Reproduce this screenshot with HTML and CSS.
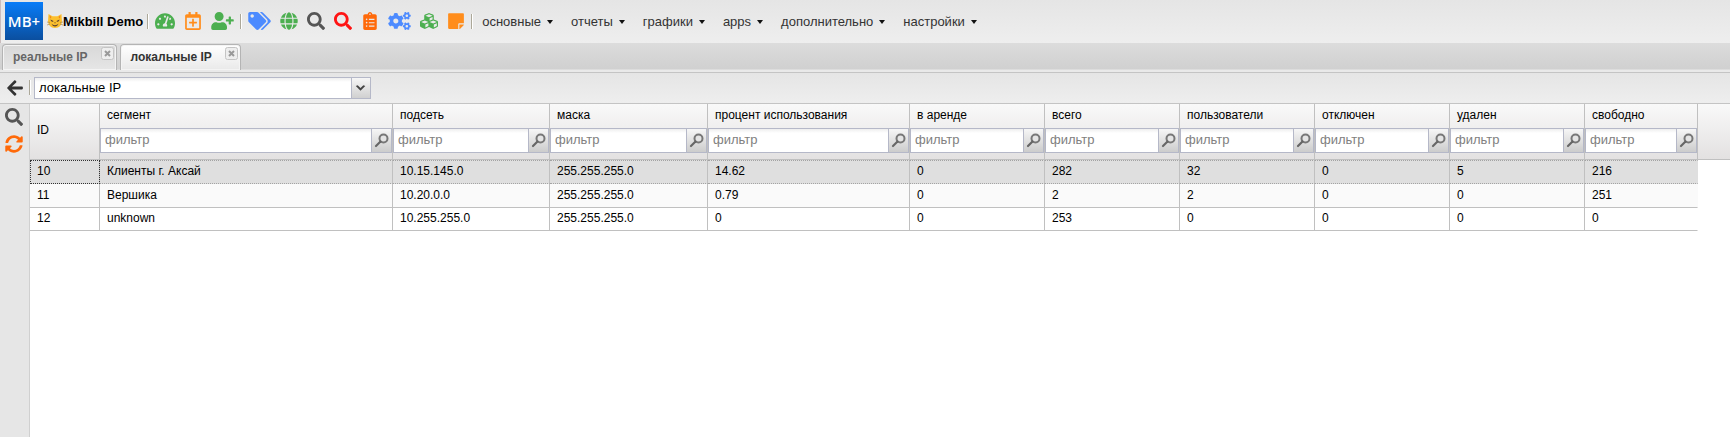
FILE: index.html
```
<!DOCTYPE html>
<html lang="ru">
<head>
    <meta charset="UTF-8" />
    <meta name="viewport" content="width=device-width, initial-scale=1.0" />
    <title>Mikbill Demo</title>
    <link rel="stylesheet" href="styles.css">
</head>
<body>
    <svg class="sprite" aria-hidden="true">
        <symbol id="i-search" viewBox="0 0 512 512"><path d="M505 442.7L405.3 343c-4.5-4.5-10.6-7-17-7H372c27.6-35.3 44-79.7 44-128C416 93.1 322.9 0 208 0S0 93.1 0 208s93.1 208 208 208c48.3 0 92.7-16.4 128-44v16.3c0 6.4 2.5 12.5 7 17l99.7 99.7c9.4 9.4 24.6 9.4 33.9 0l28.3-28.3c9.4-9.4 9.4-24.6.1-34zM208 336c-70.7 0-128-57.2-128-128 0-70.7 57.2-128 128-128 70.7 0 128 57.2 128 128 0 70.7-57.2 128-128 128z"/></symbol>
        <symbol id="i-lens" viewBox="0 0 16 16"><circle cx="9.500" cy="5.500" r="4" fill="#e4e4e4" stroke="#777" stroke-width="2"/><path d="M6.500 8.500L2 13" stroke="#666" stroke-width="2.200" stroke-linecap="round"/></symbol>
        <symbol id="i-close" viewBox="0 0 13 13"><rect x=".5" y=".5" width="12" height="12" rx="2" fill="#eee" stroke="#c4c4c4"/><path d="M4 4l5 5M9 4l-5 5" stroke="#999" stroke-width="2"/></symbol>
    </svg>

    <header class="topbar">
        <div class="logo">MB+</div>
        <svg class="cat" viewBox="0 0 16 16"><path d="M1.5 1l4 2.2h5l4-2.2.4 6c.6 4.500-2.600 8-6.900 8S.6 11.500 1.100 7z" fill="#fcc02e"/><path d="M2.600 2.600L4.500 4 3 5.800zM13.400 2.600L11.500 4 13 5.800z" fill="#f0811c"/><path d="M3.500 6.500l3 1.400c-.4 1.400-2.600 1.200-3-1.400zM12.500 6.500l-3 1.400c.4 1.400 2.600 1.200 3-1.400z" fill="#5b4230"/><path d="M7 9.500h2l-1 1zM4.500 10.500c1.500 2.200 5 2.400 7 0-.5 2-2 3-3.500 3s-3-1-3.500-3z" fill="#5b4230"/><path d="M0 9l3 .5M0 12l3-1M16 9l-3 .5M16 12l-3-1" stroke="#9b7a4a" stroke-width=".6"/></svg>
        <strong class="brand">Mikbill Demo</strong>
        <span class="sep"></span>

        <nav class="icons">
            <button type="button" class="icon green" aria-label="Панель"><svg width="20" height="18" viewBox="0 0 576 512"><path d="M288 32C128.940 32 0 160.940 0 320c0 52.800 14.250 102.260 39.060 144.800 5.610 9.620 16.300 15.200 27.440 15.200h443c11.140 0 21.830-5.580 27.440-15.200C561.750 422.260 576 372.800 576 320c0-159.060-128.940-288-288-288zm0 64c14.710 0 26.580 10.130 30.320 23.650-1.110 2.260-2.640 4.230-3.450 6.670l-9.220 27.670c-5.130 3.490-10.970 6.010-17.640 6.010-17.670 0-32-14.330-32-32S270.330 96 288 96zM96 384c-17.670 0-32-14.330-32-32s14.330-32 32-32 32 14.330 32 32-14.330 32-32 32zm48-160c-17.670 0-32-14.330-32-32s14.330-32 32-32 32 14.330 32 32-14.330 32-32 32zm246.770-72.410l-61.330 184C343.130 347.330 352 364.540 352 384c0 11.720-3.380 22.550-8.880 32H232.880c-5.500-9.450-8.880-20.280-8.880-32 0-33.940 26.500-61.430 59.900-63.590l61.340-184.010c4.170-12.560 17.730-19.450 30.360-15.170 12.570 4.190 19.350 17.790 15.170 30.360zm14.660 57.200l15.520-46.550c3.470-1.290 7.130-2.230 11.050-2.230 17.670 0 32 14.330 32 32s-14.330 32-32 32c-11.380-.010-20.890-6.280-26.570-15.220zM480 384c-17.670 0-32-14.330-32-32s14.330-32 32-32 32 14.330 32 32-14.330 32-32 32z"/></svg></button>
            <button type="button" class="icon amber" aria-label="Событие"><svg width="16" height="18" viewBox="0 0 448 512"><path d="M336 292v24c0 6.600-5.400 12-12 12h-76v76c0 6.600-5.400 12-12 12h-24c-6.600 0-12-5.400-12-12v-76h-76c-6.600 0-12-5.400-12-12v-24c0-6.600 5.400-12 12-12h76v-76c0-6.600 5.400-12 12-12h24c6.600 0 12 5.400 12 12v76h76c6.600 0 12 5.400 12 12zm112-180v352c0 26.500-21.500 48-48 48H48c-26.500 0-48-21.500-48-48V112c0-26.500 21.500-48 48-48h48V12c0-6.600 5.400-12 12-12h40c6.600 0 12 5.400 12 12v52h128V12c0-6.600 5.400-12 12-12h40c6.600 0 12 5.400 12 12v52h48c26.500 0 48 21.500 48 48zm-48 346V160H48v298c0 3.300 2.700 6 6 6h340c3.300 0 6-2.700 6-6z"/></svg></button>
            <button type="button" class="icon green" aria-label="Добавить абонента"><svg width="23" height="18" viewBox="0 0 640 512"><path d="M624 208h-64v-64c0-8.800-7.200-16-16-16h-32c-8.800 0-16 7.200-16 16v64h-64c-8.800 0-16 7.200-16 16v32c0 8.800 7.200 16 16 16h64v64c0 8.800 7.200 16 16 16h32c8.800 0 16-7.200 16-16v-64h64c8.800 0 16-7.200 16-16v-32c0-8.800-7.200-16-16-16zm-400 48c70.700 0 128-57.300 128-128S294.700 0 224 0 96 57.300 96 128s57.300 128 128 128zm89.600 32h-16.700c-22.200 10.200-46.900 16-72.900 16s-50.600-5.800-72.900-16h-16.700C60.200 288 0 348.200 0 422.400V464c0 26.500 21.500 48 48 48h352c26.500 0 48-21.500 48-48v-41.600c0-74.200-60.200-134.400-134.400-134.400z"/></svg></button>
        </nav>
        <span class="sep"></span>

        <nav class="icons">
            <button type="button" class="icon blue" aria-label="Тарифы"><svg width="23" height="18" viewBox="0 0 640 512"><path d="M497.941 225.941L286.059 14.059A48 48 0 0 0 252.118 0H48C21.490 0 0 21.490 0 48v204.118a48 48 0 0 0 14.059 33.941l211.882 211.882c18.744 18.745 49.136 18.746 67.882 0l204.118-204.118c18.745-18.745 18.745-49.137 0-67.882zM112 160c-26.510 0-48-21.490-48-48s21.490-48 48-48 48 21.490 48 48-21.490 48-48 48zm513.941 133.823L421.823 497.941c-18.745 18.745-49.137 18.745-67.882 0l-.36-.36L527.640 323.522c16.999-16.999 26.362-39.600 26.362-63.640s-9.362-46.641-26.362-63.640L331.397 0h48.721a48 48 0 0 1 33.941 14.059l211.882 211.882c18.745 18.745 18.745 49.137 0 67.882z"/></svg></button>
            <button type="button" class="icon green" aria-label="Сеть"><svg width="18" height="18" viewBox="0 0 496 512"><path d="M336.500 160C322 70.700 287.800 8 248 8s-74 62.700-88.500 152h177zM152 256c0 22.200 1.200 43.500 3.300 64h185.300c2.100-20.500 3.300-41.800 3.300-64s-1.200-43.500-3.300-64H155.300c-2.100 20.500-3.300 41.800-3.300 64zm324.700-96c-28.600-67.900-86.500-120.400-158-141.600 24.400 33.800 41.200 84.700 50 141.600h108zM177.200 18.400C105.800 39.600 47.800 92.100 19.300 160h108c8.700-56.900 25.500-107.800 49.900-141.600zM487.400 192H372.700c2.100 21 3.300 42.500 3.300 64s-1.200 43-3.300 64h114.600c5.500-20.500 8.600-41.800 8.600-64s-3.100-43.500-8.500-64zM120 256c0-21.500 1.200-43 3.300-64H8.600C3.200 212.500 0 233.800 0 256s3.200 43.500 8.600 64h114.600c-2-21-3.200-42.500-3.200-64zm39.500 96c14.500 89.300 48.700 152 88.500 152s74-62.700 88.500-152h-177zm159.300 141.600c71.400-21.200 129.400-73.700 158-141.600h-108c-8.800 56.900-25.600 107.800-50 141.600zM19.300 352c28.600 67.900 86.500 120.400 158 141.600-24.400-33.800-41.200-84.700-50-141.600h-108z"/></svg></button>
            <button type="button" class="icon dark" aria-label="Поиск"><svg width="18" height="18"><use href="#i-search"/></svg></button>
            <button type="button" class="icon red" aria-label="Расширенный поиск"><svg width="18" height="18"><use href="#i-search"/></svg></button>
            <button type="button" class="icon orange" aria-label="Заявки"><svg width="14" height="18" viewBox="0 0 384 512"><path d="M336 64h-80c0-35.300-28.700-64-64-64s-64 28.700-64 64H48C21.500 64 0 85.500 0 112v352c0 26.500 21.500 48 48 48h288c26.500 0 48-21.500 48-48V112c0-26.500-21.500-48-48-48zM96 424c-13.300 0-24-10.700-24-24s10.700-24 24-24 24 10.700 24 24-10.700 24-24 24zm0-96c-13.300 0-24-10.700-24-24s10.700-24 24-24 24 10.700 24 24-10.700 24-24 24zm0-96c-13.300 0-24-10.700-24-24s10.700-24 24-24 24 10.700 24 24-10.700 24-24 24zm96-192c13.300 0 24 10.700 24 24s-10.700 24-24 24-24-10.700-24-24 10.700-24 24-24zm128 368c0 4.400-3.600 8-8 8H168c-4.400 0-8-3.600-8-8v-16c0-4.400 3.600-8 8-8h144c4.400 0 8 3.600 8 8v16zm0-96c0 4.400-3.600 8-8 8H168c-4.400 0-8-3.600-8-8v-16c0-4.400 3.600-8 8-8h144c4.400 0 8 3.600 8 8v16zm0-96c0 4.400-3.600 8-8 8H168c-4.400 0-8-3.600-8-8v-16c0-4.400 3.600-8 8-8h144c4.400 0 8 3.600 8 8v16z"/></svg></button>
            <button type="button" class="icon blue" aria-label="Система"><svg width="23" height="18" viewBox="0 0 640 512"><path d="M512.100 191l-8.200 14.300c-3 5.300-9.400 7.500-15.100 5.400-11.800-4.400-22.600-10.700-32.100-18.600-4.600-3.800-5.800-10.500-2.800-15.700l8.200-14.300c-6.900-8-12.300-17.300-15.900-27.400h-16.500c-6 0-11.200-4.300-12.200-10.300-2-12-2.100-24.600 0-37.100 1-6 6.200-10.400 12.200-10.400h16.500c3.600-10.100 9-19.400 15.900-27.400l-8.200-14.300c-3-5.200-1.900-11.900 2.800-15.700 9.500-7.900 20.400-14.200 32.100-18.600 5.700-2.100 12.100.1 15.100 5.400l8.200 14.300c10.500-1.900 21.200-1.900 31.700 0L552 6.300c3-5.300 9.400-7.500 15.100-5.400 11.800 4.400 22.600 10.700 32.100 18.600 4.600 3.800 5.800 10.500 2.800 15.700l-8.200 14.300c6.900 8 12.300 17.300 15.900 27.400h16.500c6 0 11.200 4.300 12.200 10.300 2 12 2.100 24.600 0 37.100-1 6-6.200 10.400-12.200 10.400h-16.500c-3.600 10.100-9 19.400-15.900 27.400l8.200 14.300c3 5.200 1.900 11.900-2.800 15.700-9.500 7.900-20.400 14.200-32.100 18.600-5.700 2.100-12.100-.1-15.100-5.400l-8.200-14.300c-10.400 1.900-21.200 1.900-31.700 0zm-10.500-58.800c38.500 29.600 82.400-14.300 52.800-52.800-38.500-29.700-82.400 14.300-52.800 52.800zM386.300 286.100l33.700 16.800c10.100 5.800 14.500 18.100 10.500 29.100-8.900 24.200-26.400 46.400-42.600 65.800-7.400 8.900-20.200 11.100-30.300 5.300l-29.100-16.800c-16 13.700-34.600 24.600-54.900 31.700v33.600c0 11.600-8.300 21.600-19.700 23.600-24.600 4.200-50.400 4.400-75.900 0-11.500-2-20-11.900-20-23.600V418c-20.300-7.200-38.900-18-54.900-31.700L74 403c-10 5.800-22.900 3.600-30.300-5.300-16.200-19.400-33.300-41.600-42.200-65.700-4-10.900.4-23.200 10.500-29.100l33.300-16.800c-3.900-20.900-3.900-42.400 0-63.400L12 205.800c-10.100-5.800-14.600-18.100-10.500-29 8.900-24.200 26-46.400 42.200-65.800 7.400-8.900 20.200-11.100 30.300-5.300l29.100 16.800c16-13.700 34.600-24.600 54.900-31.700V57.100c0-11.500 8.200-21.500 19.600-23.500 24.600-4.200 50.500-4.400 76-.1 11.500 2 20 11.900 20 23.600v33.600c20.300 7.200 38.900 18 54.900 31.700l29.100-16.800c10-5.800 22.900-3.600 30.300 5.300 16.200 19.400 33.200 41.600 42.100 65.800 4 10.900.1 23.200-10 29.100l-33.700 16.800c3.900 21 3.900 42.500 0 63.500zm-117.600 21.100c59.200-77-28.700-164.900-105.700-105.700-59.200 77 28.700 164.900 105.700 105.700zm243.400 182.700l-8.200 14.300c-3 5.300-9.400 7.500-15.100 5.400-11.800-4.400-22.600-10.700-32.100-18.600-4.600-3.800-5.800-10.500-2.800-15.700l8.200-14.300c-6.900-8-12.300-17.300-15.900-27.400h-16.500c-6 0-11.200-4.300-12.200-10.300-2-12-2.100-24.600 0-37.100 1-6 6.200-10.400 12.200-10.400h16.500c3.600-10.100 9-19.400 15.900-27.400l-8.200-14.300c-3-5.200-1.900-11.900 2.800-15.700 9.500-7.900 20.400-14.200 32.100-18.600 5.700-2.100 12.100.1 15.100 5.400l8.200 14.300c10.500-1.900 21.200-1.900 31.700 0l8.200-14.300c3-5.300 9.400-7.500 15.100-5.400 11.800 4.400 22.600 10.700 32.100 18.600 4.600 3.800 5.800 10.500 2.800 15.700l-8.200 14.300c6.900 8 12.300 17.300 15.900 27.400h16.500c6 0 11.200 4.300 12.200 10.300 2 12 2.100 24.600 0 37.100-1 6-6.200 10.400-12.200 10.400h-16.500c-3.600 10.100-9 19.400-15.900 27.400l8.200 14.300c3 5.200 1.900 11.900-2.800 15.700-9.500 7.900-20.400 14.200-32.100 18.600-5.700 2.100-12.100-.1-15.100-5.400l-8.200-14.300c-10.400 1.900-21.200 1.900-31.700 0zM501.600 431c38.500 29.600 82.400-14.300 52.800-52.800-38.500-29.600-82.400 14.300-52.800 52.800z"/></svg></button>
            <button type="button" class="icon green" aria-label="Модули"><svg width="18" height="18" viewBox="0 0 512 512"><path d="M488.600 250.200L392 214V105.500c0-15-9.300-28.400-23.400-33.700l-100-37.500c-8.100-3.100-17.100-3.100-25.300 0l-100 37.500c-14.100 5.300-23.400 18.700-23.400 33.700V214l-96.600 36.200C9.300 255.500 0 268.900 0 283.900V394c0 13.600 7.700 26.100 19.900 32.200l100 50c10.100 5.100 22.100 5.100 32.200 0l103.900-52 103.900 52c10.100 5.100 22.100 5.100 32.200 0l100-50c12.200-6.100 19.900-18.600 19.900-32.200V283.900c0-15-9.300-28.400-23.400-33.700zM358 214.800l-85 31.900v-68.200l85-37v73.300zM154 104.100l102-38.200 102 38.200v.6l-102 41.400-102-41.400v-.6zm84 291.100l-85 42.500v-79.100l85-38.800v75.400zm0-112l-102 41.400-102-41.400v-.6l102-38.200 102 38.200v.6zm240 112l-85 42.500v-79.100l85-38.800v75.400zm0-112l-102 41.400-102-41.400v-.6l102-38.200 102 38.200v.6z"/></svg></button>
            <button type="button" class="icon amber" aria-label="Заметки"><svg width="16" height="18" viewBox="0 0 448 512"><path d="M312 320h136V56c0-13.300-10.700-24-24-24H24C10.700 32 0 42.700 0 56v400c0 13.300 10.700 24 24 24h264V344c0-13.200 10.800-24 24-24zm129 55l-98 98c-4.500 4.500-10.600 7-17 7h-6V352h128v6.100c0 6.300-2.500 12.400-7 16.900z"/></svg></button>
        </nav>
        <span class="sep"></span>

        <nav class="menu">
            <button type="button">основные</button>
            <button type="button">отчеты</button>
            <button type="button">графики</button>
            <button type="button">apps</button>
            <button type="button">дополнительно</button>
            <button type="button">настройки</button>
        </nav>
    </header>

    <div class="tabs">
        <div class="tab">
            <button type="button" class="tab-label">реальные IP</button>
            <button type="button" class="tab-close" aria-label="Закрыть"><svg width="13" height="13"><use href="#i-close"/></svg></button>
        </div>
        <div class="tab active">
            <button type="button" class="tab-label">локальные IP</button>
            <button type="button" class="tab-close" aria-label="Закрыть"><svg width="13" height="13"><use href="#i-close"/></svg></button>
        </div>
    </div>

    <div class="toolbar">
        <button type="button" class="icon back" aria-label="Назад"><svg width="16" height="18" viewBox="0 0 448 512"><path d="M257.500 445.100l-22.200 22.200c-9.400 9.400-24.600 9.400-33.900 0L7 273c-9.400-9.400-9.400-24.600 0-33.900L201.400 44.700c9.400-9.400 24.600-9.400 33.900 0l22.200 22.200c9.500 9.500 9.300 25-.4 34.300L136.600 216H424c13.300 0 24 10.700 24 24v32c0 13.300-10.700 24-24 24H136.600l120.500 114.800c9.800 9.300 10 24.800.4 34.300z"/></svg></button>
        <span class="sep"></span>
        <div class="combo">
            <select aria-label="Список сегментов">
                <option>локальные IP</option>
                <option>реальные IP</option>
            </select>
            <svg class="combo-arrow" width="19" height="20" viewBox="0 0 19 20"><path d="M4 8l5 5 5-5-2-1-3 3-3-3z" fill="#444"/></svg>
        </div>
    </div>

    <main class="content">
        <aside class="sidebar">
            <button type="button" class="icon dark" aria-label="Поиск"><svg width="18" height="18"><use href="#i-search"/></svg></button>
            <button type="button" class="icon orange" aria-label="Обновить"><svg width="18" height="18" viewBox="0 0 512 512"><path d="M370.720 133.280C339.458 104.008 298.888 87.962 255.848 88c-77.458.068-144.328 53.178-162.791 126.850-1.344 5.363-6.122 9.150-11.651 9.150H24.103c-7.498 0-13.194-6.807-11.807-14.176C33.933 94.924 134.813 8 256 8c66.448 0 126.791 26.136 171.315 68.685L463.030 40.970C478.149 25.851 504 36.559 504 57.941V192c0 13.255-10.745 24-24 24H345.941c-21.382 0-32.090-25.851-16.971-40.971l41.750-41.749zM32 296h134.059c21.382 0 32.090 25.851 16.971 40.971l-41.750 41.750c31.262 29.273 71.835 45.319 114.876 45.280 77.418-.070 144.315-53.144 162.787-126.849 1.344-5.363 6.122-9.150 11.651-9.150h57.304c7.498 0 13.194 6.807 11.807 14.176C478.067 417.076 377.187 504 256 504c-66.448 0-126.791-26.136-171.315-68.685L48.970 471.030C33.851 486.149 8 475.441 8 454.059V320c0-13.255 10.745-24 24-24z"/></svg></button>
        </aside>

        <table class="grid">
            <colgroup>
                <col class="c-id"><col><col class="c-net"><col class="c-mask"><col class="c-percent">
                <col class="c-num"><col class="c-num"><col class="c-num"><col class="c-num"><col class="c-num">
                <col class="c-free"><col class="c-rest">
            </colgroup>
            <thead>
                <tr>
                    <th>ID</th>
                    <th><label for="f1">сегмент</label><div class="filter"><input id="f1" type="text" placeholder="фильтр"><button type="button" aria-label="Найти"><svg width="16" height="16"><use href="#i-lens"/></svg></button></div></th>
                    <th><label for="f2">подсеть</label><div class="filter"><input id="f2" type="text" placeholder="фильтр"><button type="button" aria-label="Найти"><svg width="16" height="16"><use href="#i-lens"/></svg></button></div></th>
                    <th><label for="f3">маска</label><div class="filter"><input id="f3" type="text" placeholder="фильтр"><button type="button" aria-label="Найти"><svg width="16" height="16"><use href="#i-lens"/></svg></button></div></th>
                    <th><label for="f4">процент использования</label><div class="filter"><input id="f4" type="text" placeholder="фильтр"><button type="button" aria-label="Найти"><svg width="16" height="16"><use href="#i-lens"/></svg></button></div></th>
                    <th><label for="f5">в аренде</label><div class="filter"><input id="f5" type="text" placeholder="фильтр"><button type="button" aria-label="Найти"><svg width="16" height="16"><use href="#i-lens"/></svg></button></div></th>
                    <th><label for="f6">всего</label><div class="filter"><input id="f6" type="text" placeholder="фильтр"><button type="button" aria-label="Найти"><svg width="16" height="16"><use href="#i-lens"/></svg></button></div></th>
                    <th><label for="f7">пользователи</label><div class="filter"><input id="f7" type="text" placeholder="фильтр"><button type="button" aria-label="Найти"><svg width="16" height="16"><use href="#i-lens"/></svg></button></div></th>
                    <th><label for="f8">отключен</label><div class="filter"><input id="f8" type="text" placeholder="фильтр"><button type="button" aria-label="Найти"><svg width="16" height="16"><use href="#i-lens"/></svg></button></div></th>
                    <th><label for="f9">удален</label><div class="filter"><input id="f9" type="text" placeholder="фильтр"><button type="button" aria-label="Найти"><svg width="16" height="16"><use href="#i-lens"/></svg></button></div></th>
                    <th><label for="f10">свободно</label><div class="filter"><input id="f10" type="text" placeholder="фильтр"><button type="button" aria-label="Найти"><svg width="16" height="16"><use href="#i-lens"/></svg></button></div></th>
                    <th class="rest"></th>
                </tr>
            </thead>
            <tbody>
                <tr class="selected">
                    <td class="focused">10</td><td>Клиенты г. Аксай</td><td>10.15.145.0</td><td>255.255.255.0</td><td>14.62</td><td>0</td><td>282</td><td>32</td><td>0</td><td>5</td><td>216</td>
                </tr>
                <tr class="alt">
                    <td>11</td><td>Вершика</td><td>10.20.0.0</td><td>255.255.255.0</td><td>0.79</td><td>0</td><td>2</td><td>2</td><td>0</td><td>0</td><td>251</td>
                </tr>
                <tr>
                    <td>12</td><td>unknown</td><td>10.255.255.0</td><td>255.255.255.0</td><td>0</td><td>0</td><td>253</td><td>0</td><td>0</td><td>0</td><td>0</td>
                </tr>
            </tbody>
        </table>
    </main>
</body>
</html>
```
FILE: styles.css
```
* {
    box-sizing: border-box;
}

body {
    margin: 0;
    min-height: 100vh;
    display: flex;
    flex-direction: column;
    background: #fff;
    color: #000;
    font: 13px "Liberation Sans", Arial, sans-serif;
}

button {
    margin: 0;
    padding: 0;
    border: 0;
    background: none;
    color: inherit;
    font: inherit;
    cursor: pointer;
}

svg {
    display: block;
    fill: currentColor;
}

.sprite {
    position: absolute;
    width: 0;
    height: 0;
}

/* top bar */
.topbar {
    display: flex;
    align-items: center;
    height: 43px;
    padding: 0 0 1px 4px;
    border-left: 1px solid #c9bcbc;
    background: linear-gradient(#e5e5e5, #eee);
}

.logo {
    width: 38px;
    height: 38px;
    margin-right: 4px;
    background: linear-gradient(#087cf8, #0b4f9f);
    color: #fff;
    font: 600 15px/38px "Open Sans", sans-serif;
    text-align: center;
}

.cat {
    width: 16px;
    height: 16px;
}

.brand {
    margin-right: 4px;
    white-space: nowrap;
}

.sep {
    width: 2px;
    height: 15px;
    border-left: 1px solid #aca899;
    border-right: 1px solid #fff;
}

.icons {
    display: flex;
    gap: 9px;
    padding: 0 6px;
}

.icon {
    display: flex;
    justify-content: center;
    min-width: 18px;
}

.green { color: #4caf50; }
.amber { color: #ff8d1c; }
.orange { color: #ff6a0a; }
.blue { color: #4d8bff; }
.red { color: #ff1414; }
.dark { color: #555; }
.back { color: #333; }

.menu {
    display: flex;
    gap: 18px;
    padding-left: 9px;
    color: #333;
}

.menu button {
    display: flex;
    align-items: center;
    gap: 6px;
}

.menu button::after {
    content: "";
    margin-top: 2px;
    border: 3px solid transparent;
    border-top: 4px solid #111;
    border-bottom: 0;
}

/* tabs */
.tabs {
    display: flex;
    gap: 3px;
    height: 30px;
    padding: 1px 2px 0;
    border-bottom: 1px solid #c4c4c4;
    background: linear-gradient(#dcdcdc, #d0d0d0 26px, #e9e9e9 27px);
}

.tab {
    display: flex;
    align-items: flex-start;
    gap: 13px;
    height: 26px;
    padding: 2px 2px 0 10px;
    border: 1px solid #b4b4b4;
    border-bottom: 0;
    border-radius: 4px 4px 0 0;
    box-shadow: inset 0 0 0 1px #f4f4f4;
    background: linear-gradient(#d8d8d8, #e6e6e6);
    color: #666;
    font-size: 12px;
    font-weight: bold;
}

.tab.active {
    background: linear-gradient(#fff, #e9e9e9);
    color: #333;
}

.tab-label {
    line-height: 20px;
}

/* toolbar */
.toolbar {
    display: flex;
    align-items: center;
    height: 31px;
    padding: 0 0 1px 6px;
    border-bottom: 1px solid #c4c4c4;
    background: linear-gradient(#e5e5e5, #eee);
}

.toolbar .sep {
    margin: 0 3px 0 5px;
}

.combo {
    position: relative;
    width: 337px;
}

.combo select {
    display: block;
    width: 100%;
    height: 22px;
    padding: 0 22px 0 4px;
    border: 1px solid #b5b8c8;
    border-radius: 0;
    appearance: none;
    background: linear-gradient(#eee, #fff 4px);
    color: #000;
    font: inherit;
}

.combo-arrow {
    position: absolute;
    top: 1px;
    right: 1px;
    border-left: 1px solid #b5b8c8;
    background: linear-gradient(#f6f6f6, #d0d0d0);
    pointer-events: none;
}

/* content */
.content {
    flex: 1;
    display: flex;
    align-items: flex-start;
}

.sidebar {
    align-self: stretch;
    flex: none;
    display: flex;
    flex-direction: column;
    align-items: center;
    gap: 9px;
    width: 30px;
    padding: 4px 2px 0 0;
    border-right: 1px solid #d0d0d0;
    background: #e6e6e6;
}

.grid {
    flex: 1;
    width: 100%;
    table-layout: fixed;
    border-spacing: 0;
    font-size: 12px;
}

.c-id { width: 70px; }
.c-net { width: 157px; }
.c-mask { width: 158px; }
.c-percent { width: 202px; }
.c-num { width: 135px; }
.c-free { width: 113px; }
.c-rest { width: 32px; }

th {
    height: 56px;
    padding: 0 0 6px;
    border-right: 1px solid #c0c0c0;
    border-bottom: 1px solid #c0c0c0;
    background: linear-gradient(#f9f9f9, #e3e1e1);
    font-weight: normal;
    text-align: left;
}

th:first-child {
    padding: 0 0 4px 7px;
}

th.rest {
    border-right: 0;
}

th label {
    display: block;
    padding: 0 0 2px 7px;
    line-height: 22px;
}

.filter {
    display: flex;
    height: 25px;
    border: 1px solid #b5b8c8;
    background: linear-gradient(#eee, #fff 4px);
}

.filter input {
    flex: 1;
    min-width: 0;
    padding: 0 4px 2px;
    border: 0;
    background: none;
    font: 13px "Liberation Sans", Arial, sans-serif;
}

.filter input::placeholder {
    color: #808080;
}

.filter button {
    width: 20px;
    padding: 2px;
    border-left: 1px solid #b5b8c8;
    background: linear-gradient(#f6f6f6, #ccc);
}

td {
    height: 23px;
    padding: 0 7px 2px;
    border-right: 1px solid #c0c0c0;
    border-bottom: 1px solid #c0c0c0;
}

td:last-child {
    border-right-color: transparent;
}

.alt td {
    height: 24px;
    background: #fafafa;
}

.selected td {
    height: 24px;
    border-top: 1px dotted #a3a3a3;
    border-bottom: 1px dotted #a3a3a3;
    background: #dfdfdf;
}

.selected .focused {
    outline: 1px dotted #333;
    outline-offset: -1px;
}
```
